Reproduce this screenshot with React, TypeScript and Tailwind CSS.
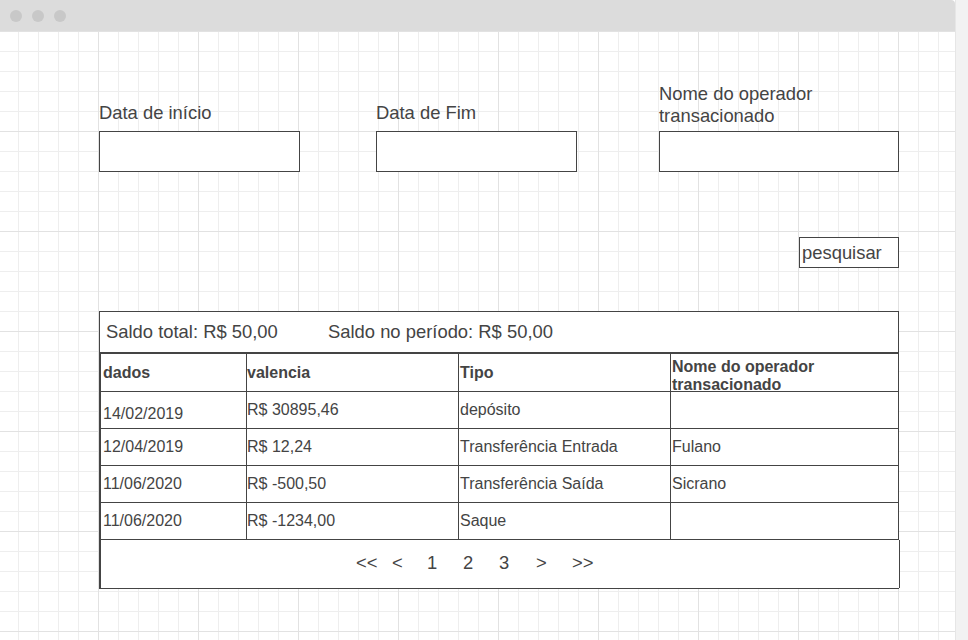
const rows = [
  { data: "14/02/2019", valor: "R$ 30895,46", tipo: "depósito", nome: "", low: true },
  { data: "12/04/2019", valor: "R$ 12,24", tipo: "Transferência Entrada", nome: "Fulano" },
  { data: "11/06/2020", valor: "R$ -500,50", tipo: "Transferência Saída", nome: "Sicrano" },
  { data: "11/06/2020", valor: "R$ -1234,00", tipo: "Saque", nome: "" },
];

const pages = [
  { label: "<<", w: "w-[36px]" },
  { label: "<", w: "w-[35px]" },
  { label: "1", w: "w-[36px]" },
  { label: "2", w: "w-[36px]" },
  { label: "3", w: "w-[37px]" },
  { label: ">", w: "w-[36px]" },
  { label: ">>", w: "w-[36px]" },
];

const Filtros = () => (
  <div className="mt-[52px] flex items-end pl-[99px]">
    <div className="w-[277px]">
      <p className="mb-[7px] text-[18.4px] leading-[22px]">Data de início</p>
      <div className="h-[41px] w-[201px] border border-[#444] bg-white" />
    </div>
    <div className="w-[283px]">
      <p className="mb-[7px] text-[18.4px] leading-[22px]">Data de Fim</p>
      <div className="h-[41px] w-[201px] border border-[#444] bg-white" />
    </div>
    <div>
      <p className="mb-[4px] text-[18.4px] leading-[22px]">
        Nome do operador
        <br />
        transacionado
      </p>
      <div className="h-[41px] w-[240px] border border-[#444] bg-white" />
    </div>
  </div>
);

const Tabela = () => (
  <div className="ml-[99px] mt-[43px] w-[800px] border border-[#444] bg-white">
    <div className="flex h-[42px] border-b-2 border-[#444] pl-[6px] text-[18.4px] leading-[40px]">
      <span className="w-[222px]">Saldo total: R$ 50,00</span>
      <span>Saldo no período: R$ 50,00</span>
    </div>
    <div className="border-l border-[#444] text-[16px]">
      <div className="grid h-[38px] grid-cols-[145px_212px_212px_228px] border-b border-[#444] font-bold">
        <div className="pl-[2px] leading-[37px]">dados</div>
        <div className="border-l border-[#444] leading-[37px]">valencia</div>
        <div className="border-l border-[#444] pl-[1px] leading-[37px]">Tipo</div>
        <div className="border-l border-[#444] pl-[1px] pt-[4px] leading-[18px]">
          Nome do operador
          <br />
          transacionado
        </div>
      </div>
      {rows.map((r, i) => (
        <div
          key={i}
          className="grid h-[37px] grid-cols-[145px_212px_212px_228px] border-b border-[#444]"
        >
          <div className={r.low ? "pl-[2px] pt-[4px] leading-[36px]" : "pl-[2px] leading-[36px]"}>
            {r.data}
          </div>
          <div className="border-l border-[#444] leading-[36px]">{r.valor}</div>
          <div className="border-l border-[#444] pl-[1px] leading-[36px]">{r.tipo}</div>
          <div className="border-l border-[#444] pl-[1px] leading-[36px]">{r.nome}</div>
        </div>
      ))}
      <div className="-mr-[2px] flex h-[48px] border-r border-[#444] bg-white pl-[255px] text-[18.4px] leading-[46px]">
        {pages.map((p) => (
          <span key={p.label} className={p.w}>
            {p.label}
          </span>
        ))}
      </div>
    </div>
  </div>
);

export default function App() {
  return (
    <div className="flex h-[640px] w-[968px] overflow-hidden bg-white font-['Liberation_Sans',Arial,sans-serif] text-[#444]">
      <div className="flex w-[955px] flex-col">
        <div className="flex h-[31px] items-center gap-[10px] rounded-tr-[4px] bg-[#dcdcdc] pl-[10px]">
          <span className="h-[12px] w-[12px] rounded-full bg-[#c8c8c8]" />
          <span className="h-[12px] w-[12px] rounded-full bg-[#c8c8c8]" />
          <span className="h-[12px] w-[12px] rounded-full bg-[#c8c8c8]" />
        </div>
        <div className="flex-1 bg-[linear-gradient(to_right,#e2e2e2_1px,transparent_1px),linear-gradient(to_bottom,#e2e2e2_1px,transparent_1px),linear-gradient(to_right,#eeeeee_1px,transparent_1px),linear-gradient(to_bottom,#eeeeee_1px,transparent_1px)] bg-[size:100px_100px,100px_100px,20px_20px,20px_20px] bg-[position:-2px_0px]">
          <Filtros />
          <div className="ml-[99px] mt-[65px] flex w-[800px] justify-end">
            <button className="h-[31px] w-[100px] self-start border border-[#444] bg-white pl-[2px] text-left text-[18.4px] leading-[26px]">
              pesquisar
            </button>
          </div>
          <Tabela />
        </div>
      </div>
      <div className="w-[13px] border-l border-[#e6e6e6] bg-[#f2f2f2]" />
    </div>
  );
}
